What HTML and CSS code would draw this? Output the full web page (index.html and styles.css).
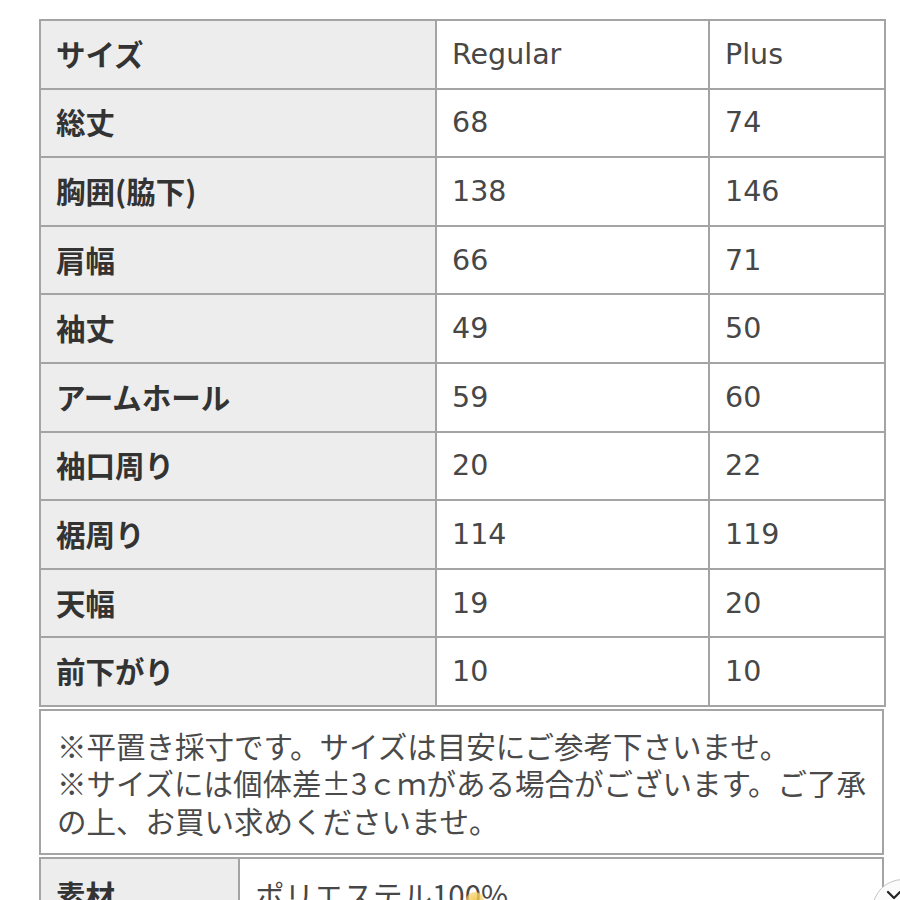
FILE: index.html
```html
<!DOCTYPE html>
<html lang="ja">
<head>
<meta charset="utf-8">
<link rel="stylesheet" href="styles.css">
</head>
<body>
<div class="page">
  <table class="size-table">
    <colgroup><col class="c-label"><col class="c-reg"><col class="c-plus"></colgroup>
    <tbody>
      <tr><th>サイズ</th><td>Regular</td><td>Plus</td></tr>
      <tr><th>総丈</th><td>68</td><td>74</td></tr>
      <tr><th>胸囲(脇下)</th><td>138</td><td>146</td></tr>
      <tr><th>肩幅</th><td>66</td><td>71</td></tr>
      <tr><th>袖丈</th><td>49</td><td>50</td></tr>
      <tr><th>アームホール</th><td>59</td><td>60</td></tr>
      <tr><th>袖口周り</th><td>20</td><td>22</td></tr>
      <tr><th>裾周り</th><td>114</td><td>119</td></tr>
      <tr><th>天幅</th><td>19</td><td>20</td></tr>
      <tr><th>前下がり</th><td>10</td><td>10</td></tr>
    </tbody>
  </table>
  <div class="notes">
    <span class="line">※平置き採寸です。サイズは目安にご参考下さいませ。</span>
    <span class="line">※サイズには個体差±3ｃｍがある場合がございます。ご了承</span>
    <span class="line">の上、お買い求めくださいませ。</span>
  </div>
  <table class="mat-table">
    <colgroup><col class="m-label"><col></colgroup>
    <tbody>
      <tr><th>素材</th><td>ポリエステル100%</td></tr>
    </tbody>
  </table>
</div>
<div class="blob"></div>
<div class="scroll-btn">
  <svg width="16" height="10" viewBox="0 0 16 10"><path d="M2 2 L8 8 L14 2" fill="none" stroke="#222" stroke-width="2.2" stroke-linecap="round" stroke-linejoin="round"/></svg>
</div>
</body>
</html>
```

FILE: styles.css
```css
html, body {
  margin: 0;
  padding: 0;
  background: #ffffff;
  height: 900px;
  overflow: hidden;
}
body {
  font-family: "Noto Sans CJK JP", "Noto Sans", sans-serif;
  color: #444;
  position: relative;
}
.page {
  padding: 19px 0 0 39px;
  width: 845px;
}
table {
  border-collapse: collapse;
  table-layout: fixed;
  width: 845px;
}
.c-label { width: 396px; }
.c-reg { width: 273px; }
.c-plus { width: 176px; }
th, td {
  border: 2px solid #a4a4a4;
  padding: 0 0 3px 15px;
  text-align: left;
  vertical-align: middle;
  white-space: nowrap;
}
.size-table th, .size-table td {
  height: 63.6px;
}
.size-table td {
  padding-bottom: 0;
  height: 66.6px;
}
th {
  background: #ededed;
  color: #333;
  font-weight: 700;
  font-size: 29.5px;
}
td {
  background: #ffffff;
  color: #474747;
  font-weight: 400;
  font-family: "DejaVu Sans", "Noto Sans CJK JP", sans-serif;
  font-size: 28.5px;
}
.notes {
  margin-top: 2px;
  border: 2px solid #a4a4a4;
  padding: 16px 0 14px 16px;
  font-size: 29.5px;
  line-height: 37.5px;
  color: #4a4a4a;
}
.notes .line {
  display: block;
  white-space: nowrap;
}
.mat-table {
  margin-top: 2px;
}
.m-label { width: 199px; }
.mat-table th, .mat-table td {
  height: 60px;
  vertical-align: top;
  padding-top: 14px;
}
.mat-table td {
  font-family: "Noto Sans CJK JP", sans-serif;
  font-size: 29.5px;
}
.blob {
  position: absolute;
  left: 466px;
  top: 892px;
  width: 18px;
  height: 16px;
  border-radius: 50%;
  background: radial-gradient(circle, #f2c23a 0%, #f6d36e 55%, rgba(246, 211, 110, 0) 100%);
  opacity: 0.8;
}
.scroll-btn {
  position: absolute;
  left: 872px;
  top: 879px;
  width: 62px;
  height: 62px;
  border-radius: 50%;
  border: 1.5px solid #c4c4c4;
  background: #fbfbfb;
  box-sizing: border-box;
  padding: 10px 0 0 13px;
}
.scroll-btn svg {
  display: block;
}
```
